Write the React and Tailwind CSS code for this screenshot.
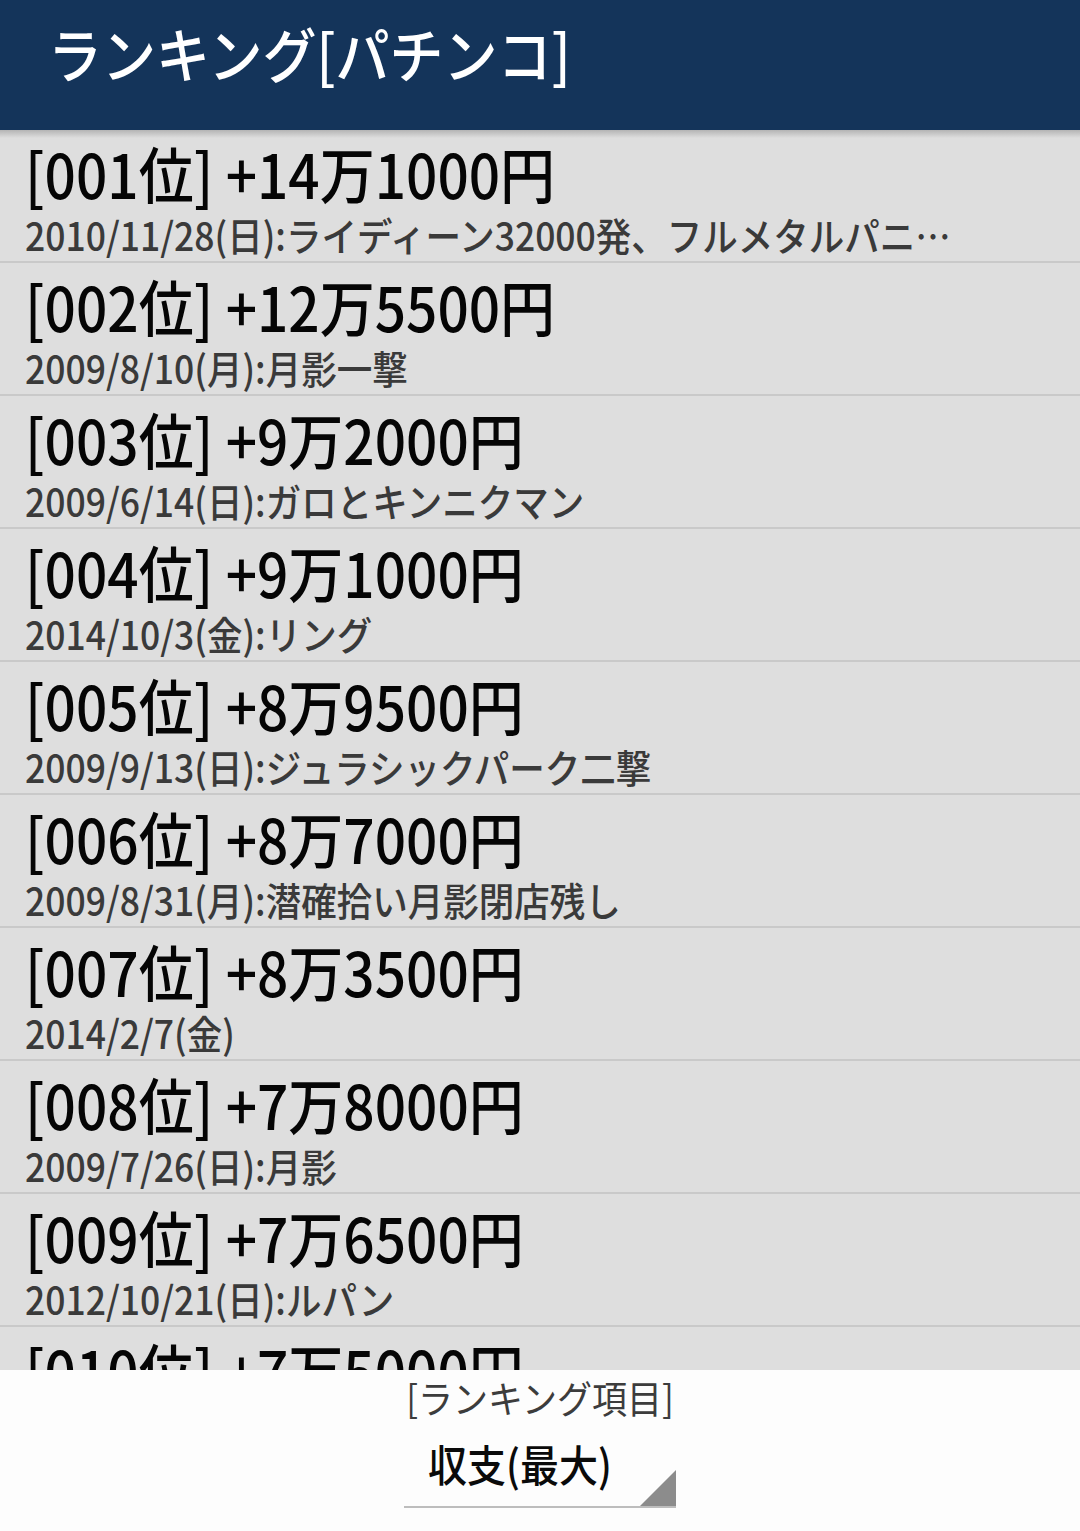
import React from "react";

const items = [
  { rank: "001", amount: "+14万1000円", note: "2010/11/28(日):ライディーン32000発、フルメタルパニ…" },
  { rank: "002", amount: "+12万5500円", note: "2009/8/10(月):月影一撃" },
  { rank: "003", amount: "+9万2000円", note: "2009/6/14(日):ガロとキンニクマン" },
  { rank: "004", amount: "+9万1000円", note: "2014/10/3(金):リング" },
  { rank: "005", amount: "+8万9500円", note: "2009/9/13(日):ジュラシックパーク二撃" },
  { rank: "006", amount: "+8万7000円", note: "2009/8/31(月):潜確拾い月影閉店残し" },
  { rank: "007", amount: "+8万3500円", note: "2014/2/7(金)" },
  { rank: "008", amount: "+7万8000円", note: "2009/7/26(日):月影" },
  { rank: "009", amount: "+7万6500円", note: "2012/10/21(日):ルパン" },
  { rank: "010", amount: "+7万5000円", note: "2011/5/3(火):海物語" },
];

function RankRow({ rank, amount, note }) {
  return (
    <div className="h-[133px] shrink-0 border-b-2 border-[#c9c9c9] pl-[25px]">
      <div className="text-[55px] font-medium leading-[76px] text-[#050505] whitespace-nowrap origin-top-left scale-y-[1.12]">
        [{rank}位] {amount}
      </div>
      <div className="mt-[5px] text-[35.5px] font-medium leading-[42px] text-[#3a3a3a] whitespace-nowrap origin-top-left scale-y-[1.1]">
        {note}
      </div>
    </div>
  );
}

export default function App() {
  return (
    <div
      className="w-[1080px] h-[1531px] flex flex-col bg-[#dedede] overflow-hidden"
      style={{ fontFamily: '"Noto Sans CJK JP", "Noto Sans", sans-serif' }}
    >
      <header className="h-[130px] shrink-0 bg-[#14345a] flex items-center pl-[48px] pb-[24px] relative z-10">
        <h1 className="text-[54px] font-medium text-white leading-none origin-left scale-y-[1.1]">
          ランキング[パチンコ]
        </h1>
      </header>

      <div className="relative flex-1 overflow-hidden">
        <div className="absolute top-0 left-0 right-0 h-[8px] bg-gradient-to-b from-[#b4b4b4] to-transparent" />
        <div className="flex flex-col">
          {items.map((it) => (
            <RankRow key={it.rank} {...it} />
          ))}
        </div>
      </div>

      <div className="h-[161px] shrink-0 bg-[#fdfdfd] flex flex-col items-center">
        <div className="mt-[2px] text-[35px] leading-[46px] text-[#3c3c3c] origin-top scale-y-[1.08]">
          [ランキング項目]
        </div>
        <div className="mt-[10px] relative w-[272px] h-[80px] border-b-2 border-[#bdbdbd] flex items-center pl-[24px] pb-[8px]">
          <span className="text-[39px] leading-none text-[#0a0a0a] font-medium scale-y-[1.12]">
            収支(最大)
          </span>
          <svg
            className="absolute right-0 bottom-0"
            width="36"
            height="36"
            viewBox="0 0 36 36"
          >
            <polygon points="0,36 36,0 36,36" fill="#8c8c8c" />
          </svg>
        </div>
      </div>
    </div>
  );
}
